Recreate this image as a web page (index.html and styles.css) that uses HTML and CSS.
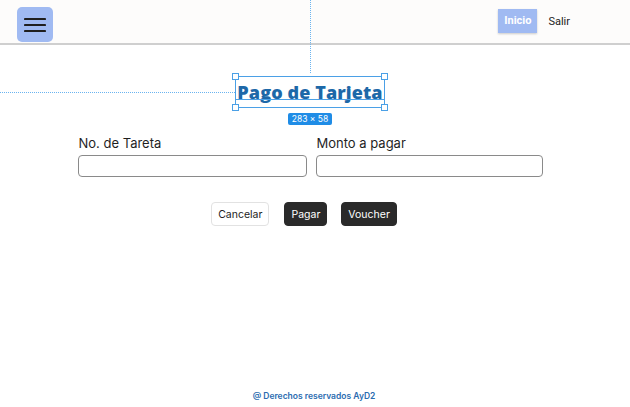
FILE: index.html
```html
<!DOCTYPE html>
<html lang="es">
<head>
<meta charset="utf-8">
<link rel="stylesheet" href="styles.css">
</head>
<body>
<div class="page">
  <header class="header">
    <button class="menu-btn" aria-label="menu">
      <svg width="22" height="16" viewBox="0 0 22 16"><path d="M1 2h20M1 8h20M1 14h20" stroke="#1f1f1f" stroke-width="2.2" stroke-linecap="round"/></svg>
    </button>
    <nav class="nav">
      <a class="nav-active">Inicio</a>
      <a class="nav-link">Salir</a>
    </nav>
  </header>
  <div class="guide-v"></div>
  <main class="main">
    <div class="title-wrap">
      <div class="guide-h"></div>
      <div class="select-box">
        <h1 class="title">Pago de Tarjeta</h1>
        <span class="baseline"></span>
        <span class="handle h-tl"></span><span class="handle h-tr"></span>
        <span class="handle h-bl"></span><span class="handle h-br"></span>
      </div>
      <span class="size-badge">283 × 58</span>
    </div>
    <form class="form">
      <div class="field">
        <label class="label">No. de Tareta</label>
        <input class="input" type="text">
      </div>
      <div class="field">
        <label class="label">Monto a pagar</label>
        <input class="input" type="text">
      </div>
    </form>
    <div class="actions">
      <button class="btn btn-light">Cancelar</button>
      <button class="btn btn-dark">Pagar</button>
      <button class="btn btn-dark">Voucher</button>
    </div>
  </main>
  <footer class="footer">@ Derechos reservados AyD2</footer>
</div>
</body>
</html>
```
FILE: styles.css
```css
html, body { margin: 0; padding: 0; }
body { background: #ffffff; font-family: Inter, "Liberation Sans", sans-serif; color: #1f1f1f; }
.page { min-height: 407px; display: flex; flex-direction: column; position: relative; }
.header {
  height: 43px; background: #fdfcfb; border-bottom: 2px solid #cfcfcf;
  display: flex; align-items: flex-start; justify-content: space-between;
  box-sizing: content-box;
}
.menu-btn {
  margin: 7px 0 0 17px; width: 36px; height: 35px; border: none; border-radius: 5px;
  background: #a0baf2; display: flex; align-items: center; justify-content: center; padding: 0;
}
.nav { display: flex; align-items: center; margin: 9px 60px 0 0; gap: 11px; font-family: Roboto, "Liberation Sans", sans-serif; font-size: 11px; }
.nav-active {
  background: #a0baf2; color: #fff; font-weight: bold; height: 24px; line-height: 24px;
  padding: 0 6px; box-shadow: 0 1px 2px rgba(0,0,0,0.2);
}
.nav-link { color: #222; }
.guide-v { position: absolute; left: 310px; top: 0; height: 73px; border-left: 1px dotted #6ab4f0; }
.main { display: flex; flex-direction: column; align-items: center; padding-right: 10px; }
.title-wrap { position: relative; margin-top: 31px; display: flex; flex-direction: column; align-items: center; }
.guide-h { position: absolute; right: 150px; width: 235px; top: 16px; border-top: 1px dotted #6ab4f0; }
.select-box {
  position: relative; width: 148px; height: 30px; border: 1px solid #4ba0e6;
  display: flex; align-items: center; justify-content: center;
}
.title {
  margin: 0; font-family: "Open Sans", sans-serif; font-weight: 800; font-size: 18px;
  color: #1d68a8; letter-spacing: 0.1px; line-height: 1;
}
.baseline { position: absolute; left: 0; right: 0; top: 22px; border-top: 1px solid #4ba0e6; }
.handle { position: absolute; width: 5px; height: 5px; background: #fff; border: 1px solid #4ba0e6; }
.h-tl { left: -4px; top: -4px; } .h-tr { right: -4px; top: -4px; }
.h-bl { left: -4px; bottom: -4px; } .h-br { right: -4px; bottom: -4px; }
.size-badge {
  margin-top: 5px; background: #1f8ce6; color: #fff; font-size: 8.5px; line-height: 12px;
  padding: 0 4px; border-radius: 2px; font-family: Inter, sans-serif;
}
.form { display: grid; grid-template-columns: 229px 227px; gap: 9px; margin-top: 10px; }
.field { display: flex; flex-direction: column; }
.label { font-size: 13px; margin-left: 1px; line-height: 16px; margin-bottom: 4px; }
.input { height: 22px; box-sizing: border-box; border: 1px solid #8a8a8a; border-radius: 4px; margin: 0; background: #fff; }
.actions { display: flex; gap: 15px; margin-top: 25px; margin-left: -12px; }
.btn {
  height: 24px; border-radius: 4px; font-family: Inter, sans-serif; font-size: 10.5px; padding: 0 6px; margin: 0;
}
.btn-light { background: #fff; border: 1px solid #e2e2e2; color: #222; }
.btn-dark { background: #2a2a2a; border: 1px solid #2a2a2a; color: #fff; }
.btn-dark + .btn-dark { margin-left: -1px; }
.footer {
  margin-top: auto; text-align: center; padding-bottom: 6px; font-size: 8.5px; font-weight: 600;
  color: #2b6cb0; padding-right: 2px;
}
```
